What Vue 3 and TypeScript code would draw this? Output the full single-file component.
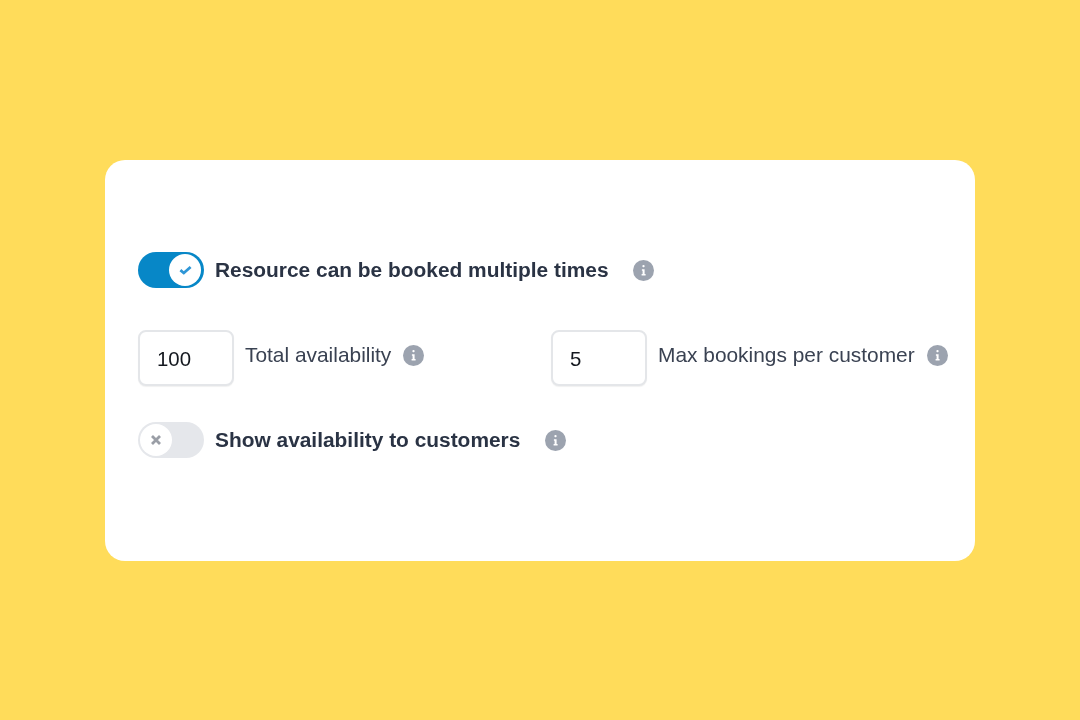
<script setup lang="ts">
const fields = [
  { value: '100', label: 'Total availability' },
  { value: '5', label: 'Max bookings per customer' },
];
</script>

<template>
  <div class="page">
    <div class="card">
      <div class="row row-top">
        <span class="toggle on">
          <span class="knob">
            <svg width="15" height="12" viewBox="0 0 15 12">
              <path d="M2.4 6.2 5.8 9 12.6 3" fill="none" stroke="#2e96d6" stroke-width="2.8" />
            </svg>
          </span>
        </span>
        <span class="title">Resource can be booked multiple times</span>
        <svg class="info info-title" width="21" height="21" viewBox="0 0 21 21">
          <circle cx="10.5" cy="10.5" r="10.5" fill="#9ca3af" />
          <rect x="9.4" y="5" width="2.2" height="2.2" rx="1" fill="#fff" />
          <path d="M8.9 9.2h2.7v4.9h1v1.5H8.6v-1.5h1v-3.4h-.7z" fill="#fff" />
        </svg>
      </div>

      <div class="fields">
        <div v-for="f in fields" :key="f.label" class="field">
          <input class="num" type="text" :value="f.value" readonly />
          <span class="label">{{ f.label }}</span>
          <svg class="info" width="21" height="21" viewBox="0 0 21 21">
            <circle cx="10.5" cy="10.5" r="10.5" fill="#9ca3af" />
            <rect x="9.4" y="5" width="2.2" height="2.2" rx="1" fill="#fff" />
            <path d="M8.9 9.2h2.7v4.9h1v1.5H8.6v-1.5h1v-3.4h-.7z" fill="#fff" />
          </svg>
        </div>
      </div>

      <div class="row">
        <span class="toggle off">
          <span class="knob">
            <svg width="12" height="12" viewBox="0 0 12 12">
              <path d="M2 2 10 10M10 2 2 10" fill="none" stroke="#9a9ea6" stroke-width="2.8" />
            </svg>
          </span>
        </span>
        <span class="title">Show availability to customers</span>
        <svg class="info info-title" width="21" height="21" viewBox="0 0 21 21">
          <circle cx="10.5" cy="10.5" r="10.5" fill="#9ca3af" />
          <rect x="9.4" y="5" width="2.2" height="2.2" rx="1" fill="#fff" />
          <path d="M8.9 9.2h2.7v4.9h1v1.5H8.6v-1.5h1v-3.4h-.7z" fill="#fff" />
        </svg>
      </div>
    </div>
  </div>
</template>

<style>
body {
  margin: 0;
}
</style>

<style scoped>
.page {
  width: 1080px;
  height: 720px;
  background: #ffdc5a;
  padding-top: 160px;
  padding-left: 105px;
  box-sizing: border-box;
  font-family: 'Liberation Sans', Arial, sans-serif;
  overflow: hidden;
}

.card {
  width: 870px;
  height: 401px;
  background: #fff;
  border-radius: 20px;
  padding: 92px 0 0 33px;
  box-sizing: border-box;
  filter: blur(0.4px);
}

.row {
  display: flex;
  align-items: center;
  height: 36px;
}

.toggle {
  display: flex;
  align-items: center;
  width: 66px;
  height: 36px;
  border-radius: 18px;
  padding: 2px;
  box-sizing: border-box;
  flex-shrink: 0;
}

.toggle.on {
  background: #0787c7;
  justify-content: flex-end;
  padding-right: 3px;
}

.toggle.off {
  background: #e5e7eb;
}

.knob {
  display: flex;
  align-items: center;
  justify-content: center;
  width: 32px;
  height: 32px;
  border-radius: 50%;
  background: #fff;
}

.title {
  margin-left: 11px;
  font-size: 20.9px;
  font-weight: 700;
  color: #2a3344;
  white-space: nowrap;
}

.info {
  display: block;
  flex-shrink: 0;
}

.info-title {
  margin-left: 24.5px;
}

.fields {
  display: grid;
  grid-template-columns: 413px 1fr;
  margin: 42px 0 36px;
}

.field {
  display: flex;
  align-items: center;
}

.num {
  width: 96px;
  height: 56px;
  border: 2px solid #e4e6e9;
  border-radius: 8px;
  padding: 2px 0 0 17px;
  box-sizing: border-box;
  font-family: inherit;
  font-size: 20.4px;
  color: #14181f;
  background: #fff;
  box-shadow: 0 1px 1px rgba(0, 0, 0, 0.06);
  outline: none;
}

.label {
  margin-left: 11px;
  margin-right: 12px;
  margin-top: -6px;
  font-size: 20.9px;
  color: #3a4252;
  white-space: nowrap;
}

.field .info {
  margin-top: -6px;
}
</style>
